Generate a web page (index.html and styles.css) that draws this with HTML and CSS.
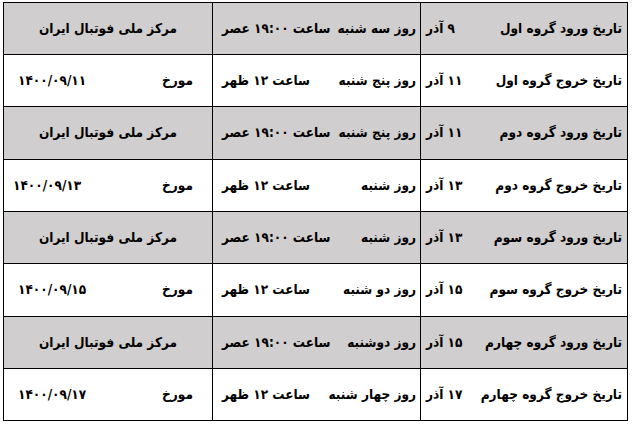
FILE: index.html
```html
<!DOCTYPE html>
<html lang="fa" dir="rtl">
<head>
<meta charset="utf-8">
<title>برنامه ورود و خروج گروه‌ها</title>
<link rel="stylesheet" href="styles.css">
</head>
<body>
<div class="sheet">
  <div class="cell c1 grey"><span>تاریخ ورود گروه اول</span><span>۹ آذر</span></div>
  <div class="cell c2 grey"><span>روز سه شنبه</span><span>ساعت ۱۹:۰۰ عصر</span></div>
  <div class="cell c3 grey center"><span>مرکز ملی فوتبال ایران</span></div>

  <div class="cell c1"><span>تاریخ خروج گروه اول</span><span>۱۱ آذر</span></div>
  <div class="cell c2"><span>روز پنج شنبه</span><span>ساعت ۱۲ ظهر</span></div>
  <div class="cell c3"><span>مورخ</span><span>۱۴۰۰/۰۹/۱۱</span></div>

  <div class="cell c1 grey"><span>تاریخ ورود گروه دوم</span><span>۱۱ آذر</span></div>
  <div class="cell c2 grey"><span>روز پنج شنبه</span><span>ساعت ۱۹:۰۰ عصر</span></div>
  <div class="cell c3 grey center"><span>مرکز ملی فوتبال ایران</span></div>

  <div class="cell c1"><span>تاریخ خروج گروه دوم</span><span>۱۳ آذر</span></div>
  <div class="cell c2"><span>روز شنبه</span><span>ساعت ۱۲ ظهر</span></div>
  <div class="cell c3 wide"><span>مورخ</span><span>۱۴۰۰/۰۹/۱۳</span></div>

  <div class="cell c1 grey"><span>تاریخ ورود گروه سوم</span><span>۱۳ آذر</span></div>
  <div class="cell c2 grey"><span>روز شنبه</span><span>ساعت ۱۹:۰۰ عصر</span></div>
  <div class="cell c3 grey center"><span>مرکز ملی فوتبال ایران</span></div>

  <div class="cell c1"><span>تاریخ خروج گروه سوم</span><span>۱۵ آذر</span></div>
  <div class="cell c2"><span>روز دو شنبه</span><span>ساعت ۱۲ ظهر</span></div>
  <div class="cell c3"><span>مورخ</span><span>۱۴۰۰/۰۹/۱۵</span></div>

  <div class="cell c1 grey"><span>تاریخ ورود گروه چهارم</span><span>۱۵ آذر</span></div>
  <div class="cell c2 grey"><span>روز دوشنبه</span><span>ساعت ۱۹:۰۰ عصر</span></div>
  <div class="cell c3 grey center"><span>مرکز ملی فوتبال ایران</span></div>

  <div class="cell c1"><span>تاریخ خروج گروه چهارم</span><span>۱۷ آذر</span></div>
  <div class="cell c2"><span>روز چهار شنبه</span><span>ساعت ۱۲ ظهر</span></div>
  <div class="cell c3"><span>مورخ</span><span>۱۴۰۰/۰۹/۱۷</span></div>
</div>
</body>
</html>
```

FILE: styles.css
```css
html, body {
  margin: 0;
  padding: 0;
  background: #ffffff;
}

body {
  font-family: "DejaVu Sans Condensed", "DejaVu Sans", sans-serif;
  font-weight: bold;
  font-size: 13.5px;
  color: #000000;
  direction: rtl;
}

.sheet {
  display: grid;
  grid-template-columns: 207px 208px 209px;
  grid-template-rows: 52px 52px 53px 52px 52px 53px 52px 52px;
  margin: 2px 4px 0 3px;
  border-top: 1px solid #000;
  border-right: 1px solid #000;
}

.cell {
  display: flex;
  align-items: center;
  justify-content: space-between;
  gap: 6px;
  border-left: 1px solid #000;
  border-bottom: 1px solid #000;
  padding: 0 4px 2px 4px;
  white-space: nowrap;
}

.grey {
  background: #d0cece;
}

.c1 {
  padding: 0 5px 2px 5px;
}

.c2 {
  padding: 0 4px 2px 9px;
}

.c3 {
  padding: 0 19px 2px 14px;
}

.c3.wide {
  padding-left: 9px;
}

.center {
  justify-content: center;
  padding: 0 0 2px 0;
}
```
